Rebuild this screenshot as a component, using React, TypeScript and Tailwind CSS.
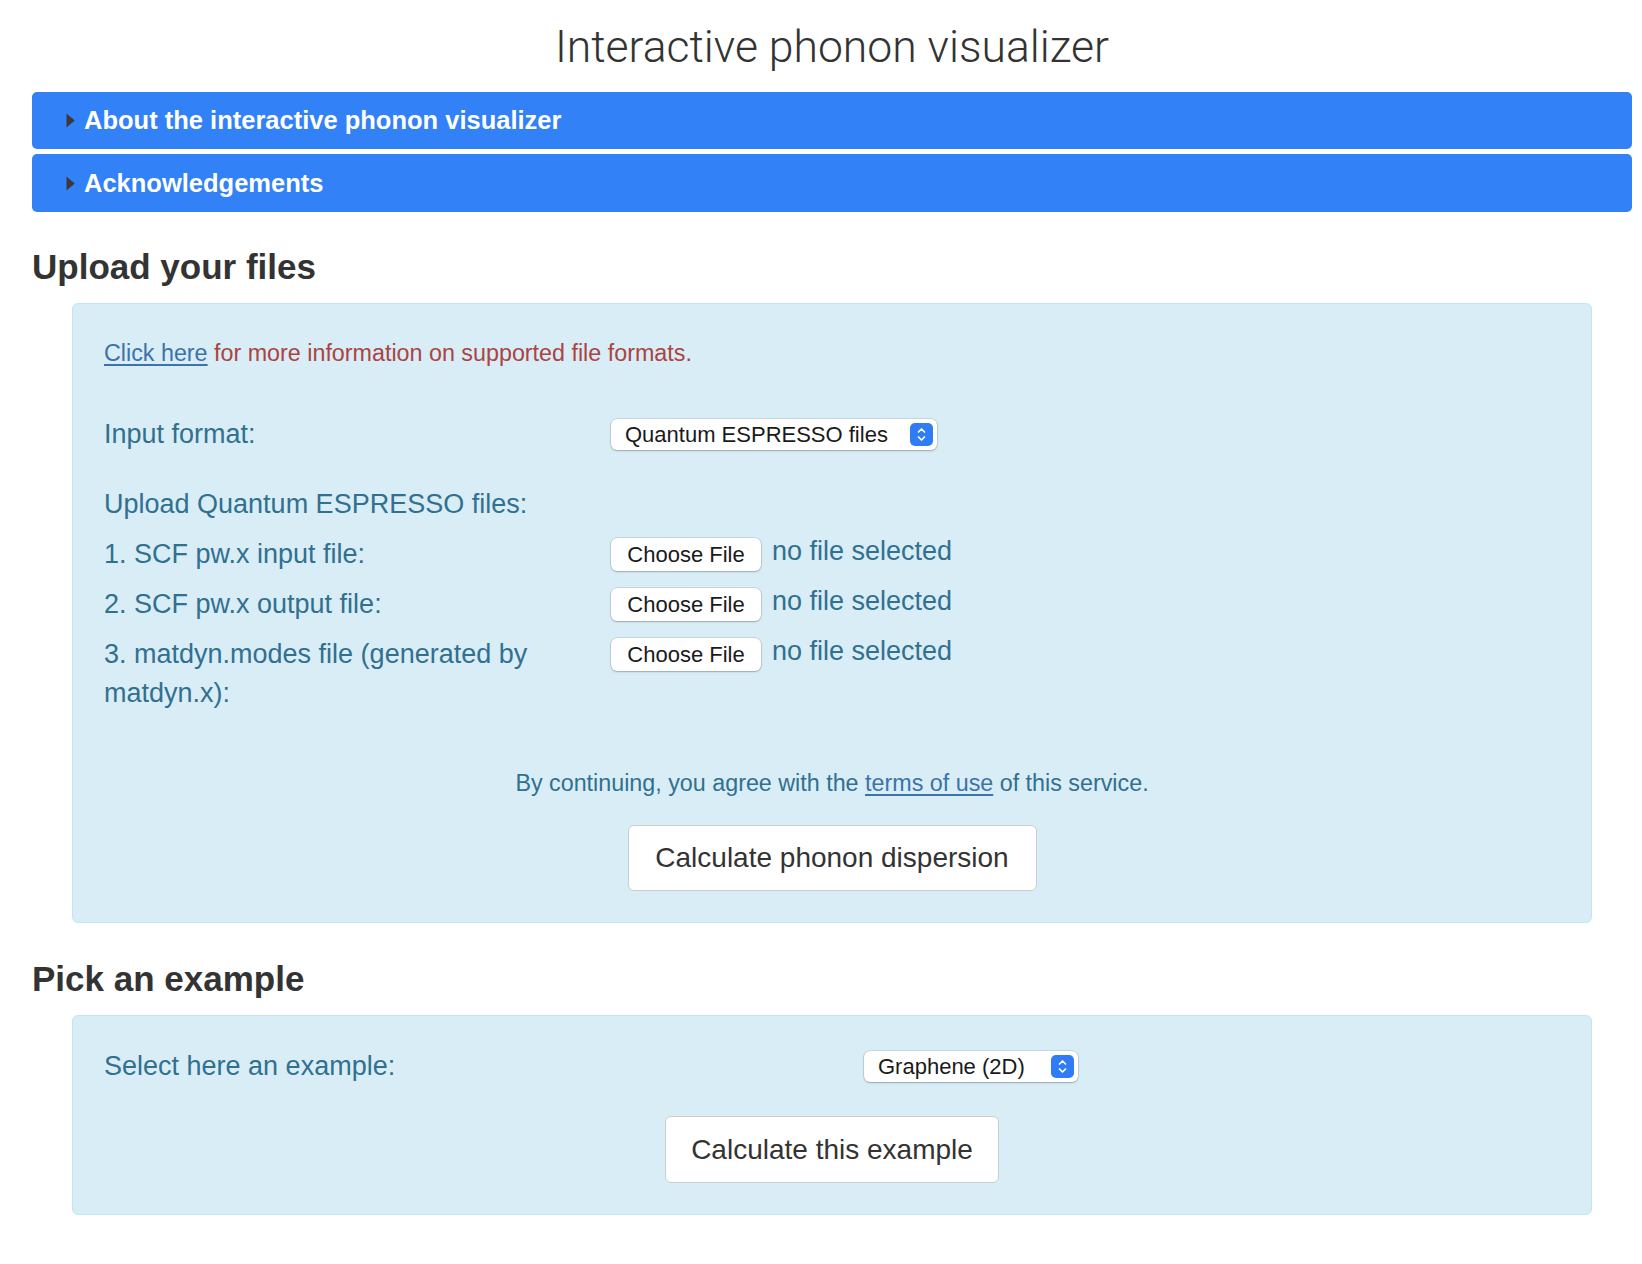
import React from 'react';

const body = "font-['Liberation_Sans','Helvetica_Neue',Arial,sans-serif]";

function Triangle() {
  return (
    <svg width="9" height="15" viewBox="0 0 9 15" className="shrink-0">
      <path d="M0.5 0.5 L8.8 7.5 L0.5 14.5 Z" fill="#3a3a3a" />
    </svg>
  );
}

function SelectArrows() {
  return (
    <span className="flex h-[23px] w-[23px] shrink-0 items-center justify-center rounded-[5px] bg-[#2f7cf6]">
      <svg width="11" height="17" viewBox="0 0 11 17" fill="none">
        <path d="M2.5 6 L5.5 3 L8.5 6" stroke="white" strokeWidth="1.7" strokeLinecap="round" strokeLinejoin="round" />
        <path d="M2.5 11 L5.5 14 L8.5 11" stroke="white" strokeWidth="1.7" strokeLinecap="round" strokeLinejoin="round" />
      </svg>
    </span>
  );
}

function NativeSelect({ label, width }: { label: string; width: string }) {
  return (
    <div
      className={`flex h-[31px] items-center justify-between rounded-[6px] bg-white pl-[14px] pr-[4px] text-[22px] text-[#1a1a1a] shadow-[0_0_0_0.5px_rgba(0,0,0,0.18),0_1px_2px_rgba(0,0,0,0.22)] ${width}`}
    >
      <span className="leading-none">{label}</span>
      <SelectArrows />
    </div>
  );
}

function FileInput() {
  return (
    <div className="flex h-[39px] items-center">
      <span className="flex h-[33px] w-[150px] items-center justify-center rounded-[6px] bg-white text-[22px] text-[#1a1a1a] shadow-[0_0_0_0.5px_rgba(0,0,0,0.18),0_1px_2px_rgba(0,0,0,0.22)]">
        Choose File
      </span>
      <span className="mb-[6px] ml-[11px] text-[27px]">no file selected</span>
    </div>
  );
}

const fileRows = [
  '1. SCF pw.x input file:',
  '2. SCF pw.x output file:',
  '3. matdyn.modes file (generated by matdyn.x):'
];

export default function App() {
  return (
    <div className={`min-h-screen bg-white text-[#333] ${body}`}>
      <div className="ml-[32px] mr-[10px] pb-[40px]">
        <h1 className="pb-[20px] pt-[22px] text-center font-['Roboto',sans-serif] text-[44.5px] font-light leading-[50px] text-[#333]">
          Interactive phonon visualizer
        </h1>

        <div className="flex h-[57px] items-center gap-[9px] rounded-[5px] bg-[#3381f6] pl-[34px] text-[25.5px] font-bold text-white">
          <Triangle />
          <span>About the interactive phonon visualizer</span>
        </div>
        <div className="mt-[5px] flex h-[58px] items-center gap-[9px] rounded-[5px] bg-[#3381f6] pl-[34px] text-[25.5px] font-bold text-white">
          <Triangle />
          <span>Acknowledgements</span>
        </div>

        <h3 className="mb-[18px] mt-[37px] text-[35px] font-bold leading-[36px]">Upload your files</h3>

        <div className="mx-[40px] rounded-[6px] border border-[#bce8f1] bg-[#d9edf7] px-[31px] pb-[31px] pt-[33px] text-[#31708f]">
          <p className="text-[23.3px] leading-[33px] text-[#a94442]">
            <a className="text-[#3b73aa] underline underline-offset-[3px]">Click here</a> for more information on supported file formats.
          </p>

          <div className="mt-[45px] grid grid-cols-[443px_1fr] items-center gap-x-[64px] text-[27px] leading-[39px]">
            <span>Input format:</span>
            <NativeSelect label="Quantum ESPRESSO files" width="w-[326px]" />
          </div>

          <div className="mt-[31px] text-[27px] leading-[39px]">Upload Quantum ESPRESSO files:</div>

          {fileRows.map((row) => (
            <div key={row} className="mt-[11px] grid grid-cols-[443px_1fr] items-start gap-x-[64px] text-[27px] leading-[39px]">
              <span>{row}</span>
              <FileInput />
            </div>
          ))}

          <p className="mt-[54px] text-center text-[23.3px] leading-[33px]">
            By continuing, you agree with the{' '}
            <a className="text-[#3b73aa] underline underline-offset-[3px]">terms of use</a> of this service.
          </p>

          <div className="mt-[25px] flex justify-center">
            <button className="h-[66px] w-[409px] rounded-[6px] border border-[#ccc] bg-white text-[28px] text-[#333]">
              Calculate phonon dispersion
            </button>
          </div>
        </div>

        <h3 className="mb-[18px] mt-[38px] text-[35px] font-bold leading-[36px]">Pick an example</h3>

        <div className="mx-[40px] rounded-[6px] border border-[#bce8f1] bg-[#d9edf7] px-[31px] pb-[31px] pt-[31px] text-[#31708f]">
          <div className="grid grid-cols-2 items-center gap-x-[64px] text-[27px] leading-[39px]">
            <span>Select here an example:</span>
            <NativeSelect label="Graphene (2D)" width="w-[214px]" />
          </div>
          <div className="mt-[30px] flex justify-center">
            <button className="h-[67px] w-[334px] rounded-[6px] border border-[#ccc] bg-white text-[28px] text-[#333]">
              Calculate this example
            </button>
          </div>
        </div>
      </div>
    </div>
  );
}
